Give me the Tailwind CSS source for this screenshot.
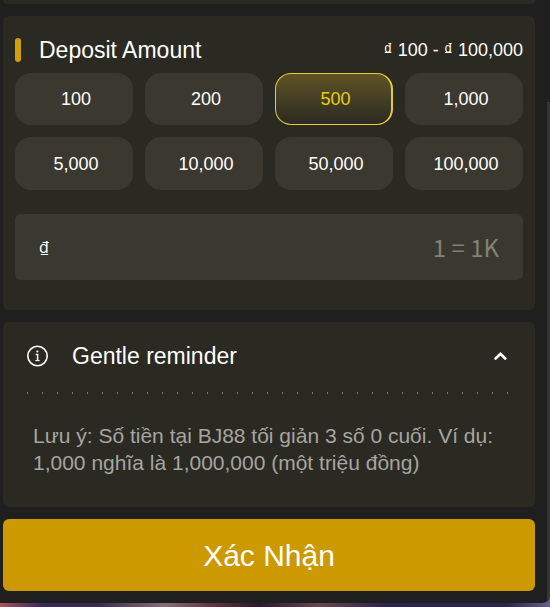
<!DOCTYPE html>
<html lang="vi">
<head>
    <meta charset="UTF-8">
    <meta name="viewport" content="width=device-width, initial-scale=1.0">
    <title>Deposit</title>
    <script src="https://cdn.jsdelivr.net/npm/@tailwindcss/browser@4"></script>
</head>
<body class="bg-[linear-gradient(90deg,#b0505a_0%,#35265e_8%,#3a2a50_18%,#8a6c78_30%,#6b3340_38%,#2a1830_47%,#6a4450_58%,#2c2350_70%,#2a2250_92%,#6a5c90_100%)] font-['Liberation_Sans',Arial,sans-serif] text-white">
    <div class="relative flex flex-col gap-3 overflow-hidden rounded-br-lg bg-[#1f1f1f] pr-[15px] pb-3 pl-[3px]">
        <!-- end of the previous section -->
        <div class="h-1 rounded-b-md bg-[#2a2922]"></div>

        <section class="rounded-md bg-[#2a2922] px-3 pt-5 pb-[30px]">
            <div class="flex h-7 items-center">
                <span class="h-6 w-[6px] rounded-sm bg-[#d19e0d]"></span>
                <h2 class="ml-[18px] flex-1 text-[23px] leading-7">Deposit Amount</h2>
                <p class="text-lg leading-7">₫ 100 - ₫ 100,000</p>
            </div>
            <div class="mt-[9px] grid grid-cols-4 gap-3 text-lg">
                <button type="button" class="amount h-[52px] rounded-2xl bg-[#3b3830] pl-1">100</button>
                <button type="button" class="amount h-[52px] rounded-2xl bg-[#3b3830] pl-1">200</button>
                <button type="button" class="amount h-[52px] rounded-2xl border border-r-2 border-[#e8cb2e] bg-linear-to-b from-[#5f5424] to-[#2c2a22] pl-1 text-[#eccb12]">500</button>
                <button type="button" class="amount h-[52px] rounded-2xl bg-[#3b3830] pl-1">1,000</button>
                <button type="button" class="amount h-[53px] rounded-2xl bg-[#3b3830] pl-1">5,000</button>
                <button type="button" class="amount h-[53px] rounded-2xl bg-[#3b3830] pl-1">10,000</button>
                <button type="button" class="amount h-[53px] rounded-2xl bg-[#3b3830] pl-1">50,000</button>
                <button type="button" class="amount h-[53px] rounded-2xl bg-[#3b3830] pl-1">100,000</button>
            </div>
            <div class="mt-6 flex h-[66px] items-center rounded-md bg-[#3a3930] px-6">
                <label for="amount" class="font-['Open_Sans',sans-serif] text-base">₫</label>
                <input type="text" id="amount" name="amount" placeholder="1 = 1K" class="min-w-0 flex-1 bg-transparent text-right font-['Noto_Sans_CJK_SC',sans-serif] text-2xl text-white outline-none placeholder:text-[#82817a]">
            </div>
        </section>

        <section class="rounded-md bg-[#2a2922] px-6 pt-5 pb-[31px]">
            <button type="button" id="toggle" aria-expanded="true" aria-controls="reminder" class="flex w-full items-center text-left">
                <svg class="size-[22px]" viewBox="0 0 22 22" fill="none" stroke="currentColor">
                    <circle cx="10.5" cy="11" r="9.7" stroke-width="1.6"/>
                    <circle cx="10.4" cy="6.5" r="1.1" fill="currentColor" stroke="none"/>
                    <path d="M8.6 9.5h2v6.4" stroke-width="1.5"/>
                    <path d="M8.4 15.6h4.2" stroke-width="1.1"/>
                </svg>
                <span class="ml-[23px] flex-1 text-[23px] leading-7">Gentle reminder</span>
                <svg class="mr-1 h-[10px] w-[14px]" viewBox="0 0 14 10" fill="none" stroke="currentColor" stroke-width="2.6" stroke-linecap="round" stroke-linejoin="miter">
                    <path d="M2.6 7.5 7.5 2.8 12.2 7.5"/>
                </svg>
            </button>
            <div class="mt-[22px] h-[2px] bg-[repeating-linear-gradient(90deg,#7d7c76_0_1px,transparent_1px_15px)]"></div>
            <p id="reminder" class="mt-[28px] pl-[6px] text-[21px] leading-[27px] text-[#a6a5a1]">Lưu ý: Số tiền tại BJ88 tối giản 3 số 0 cuối. Ví dụ: 1,000 nghĩa là 1,000,000 (một triệu đồng)</p>
        </section>

        <button type="submit" class="h-[72px] rounded-md bg-[#cd9900] text-[30px]">Xác Nhận</button>

        <!-- scroll thumb -->
        <div class="absolute top-[102px] right-0 bottom-0 w-[3px] bg-[#353535]"></div>
    </div>

    <script>
        const amountInput = document.getElementById('amount');
        document.querySelectorAll('.amount').forEach(function(button) {
            button.addEventListener('click', function() {
                amountInput.value = this.textContent;
            });
        });

        document.getElementById('toggle').addEventListener('click', function() {
            const hidden = document.getElementById('reminder').classList.toggle('hidden');
            this.setAttribute('aria-expanded', String(!hidden));
        });
    </script>
</body>
</html>
